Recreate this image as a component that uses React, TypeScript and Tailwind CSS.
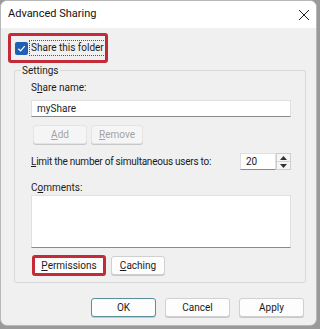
import React from 'react';

const font = { fontFamily: 'Roboto, "Liberation Sans", sans-serif' };

function Btn({
  children,
  w = 'w-[65px]',
  disabled = false,
  primary = false,
}: {
  children: React.ReactNode;
  w?: string;
  disabled?: boolean;
  primary?: boolean;
}) {
  const border = primary ? 'border-[#5b8f9c]' : disabled ? 'border-[#e4e4e4]' : 'border-[#d0d0d0]';
  const color = disabled ? 'text-[#a3a3a3]' : 'text-[#1b1b1b]';
  const bg = disabled ? 'bg-[#f5f5f5]' : 'bg-[#fdfdfd]';
  return (
    <div
      className={`${w} h-[19px] flex items-center justify-center rounded-[3px] border ${border} ${bg} ${color} text-[10px] leading-none whitespace-nowrap shadow-[0_1px_0_#c8c8c8]`}
    >
      {children}
    </div>
  );
}

export default function App() {
  return (
    <div className="w-[320px] h-[329px] bg-[#9a9a9a] overflow-hidden" style={font}>
      <div className="w-[317px] h-[326px] flex flex-col rounded-[7px] overflow-hidden border border-[#b8b8b8] bg-[#f0f0f0] text-[10px] text-[#1b1b1b] whitespace-nowrap">
        {/* title bar */}
        <div className="h-[27px] bg-white flex items-center justify-between pl-[7px] pr-[6px]">
          <span className="text-[11px] text-[#111]">Advanced Sharing</span>
          <svg width="12" height="12" viewBox="0 0 12 12">
            <path d="M1 1 L11 11 M11 1 L1 11" stroke="#222" strokeWidth="1" fill="none" />
          </svg>
        </div>

        <div className="flex flex-col">
          {/* share checkbox */}
          <div className="mt-[5px] ml-[7px] w-[100px] h-[30px] border-[3px] border-[#c42a38] rounded-[3px] flex items-center pl-[4px]">
            <div className="w-[13px] h-[13px] shrink-0 rounded-[2px] bg-[#1f5fb4] flex items-center justify-center">
              <svg width="9" height="9" viewBox="0 0 10 10">
                <path d="M1.5 5.2 L4 7.6 L8.6 2.4" stroke="#fff" strokeWidth="1.4" fill="none" />
              </svg>
            </div>
            <span className="ml-[1px] px-[1px] border border-dotted border-[#555] leading-[14px] text-[10px]">
              Share this folder
            </span>
          </div>

          {/* settings group */}
          <div className="relative mt-[7px] ml-[13px] w-[292px] h-[213px] border border-[#d8d8d8] rounded-[2px] pl-[16px] pt-[9px]">
            <span className="absolute left-[6px] -top-[8px] px-[1px] bg-[#f0f0f0] leading-[15px]">Settings</span>

            <div className="leading-[16px] h-[16px]">
              S<u>h</u>are name:
            </div>
            <div className="mt-[4px] w-[260px] h-[17px] bg-white border border-[#e0e0e0] border-b-[#8a8a8a] flex items-center pl-[5px] leading-none">
              myShare
            </div>

            <div className="mt-[8px] ml-[2px] flex gap-[4px]">
              <Btn w="w-[54px]" disabled>
                <u>A</u>dd
              </Btn>
              <Btn w="w-[52px]" disabled>
                <u>R</u>emove
              </Btn>
            </div>

            <div className="mt-[9px] w-[260px] h-[17px] flex items-center justify-between">
              <span className="tracking-[-0.25px]">
                <u>L</u>imit the number of simultaneous users to:
              </span>
              <div className="flex h-[17px]">
                <div className="w-[36px] h-full bg-white border border-[#e0e0e0] border-b-[#8a8a8a] flex items-center pl-[5px] leading-none">
                  20
                </div>
                <div className="w-[15px] h-full flex flex-col border border-[#cfcfcf] bg-[#f6f6f6]">
                  <div className="flex-1 flex items-center justify-center border-b border-[#d6d6d6]">
                    <svg width="7" height="4" viewBox="0 0 7 4">
                      <path d="M0 4 L3.5 0 L7 4 Z" fill="#333" />
                    </svg>
                  </div>
                  <div className="flex-1 flex items-center justify-center">
                    <svg width="7" height="4" viewBox="0 0 7 4">
                      <path d="M0 0 L3.5 4 L7 0 Z" fill="#333" />
                    </svg>
                  </div>
                </div>
              </div>
            </div>

            <div className="mt-[11px] h-[14px] leading-[14px]">
              C<u>o</u>mments:
            </div>
            <div className="w-[260px] h-[53px] bg-white border border-[#e0e0e0] border-b-[#8a8a8a]" />

            <div className="mt-[7px] flex items-center">
              <div className="ml-[1px] w-[74px] h-[21px] border-[3px] border-[#c42a38] rounded-[3px] flex">
                <div className="flex-1 flex items-center justify-center bg-[#fdfdfd]">
                  <u>P</u>ermissions
                </div>
              </div>
              <div className="ml-[5px]">
                <Btn w="w-[54px]">
                  <u>C</u>aching
                </Btn>
              </div>
            </div>
          </div>

          {/* dialog buttons */}
          <div className="mt-[15px] flex justify-end gap-[9px] pr-[12px]">
            <Btn primary>OK</Btn>
            <Btn>Cancel</Btn>
            <Btn>Apply</Btn>
          </div>
        </div>
      </div>
    </div>
  );
}
